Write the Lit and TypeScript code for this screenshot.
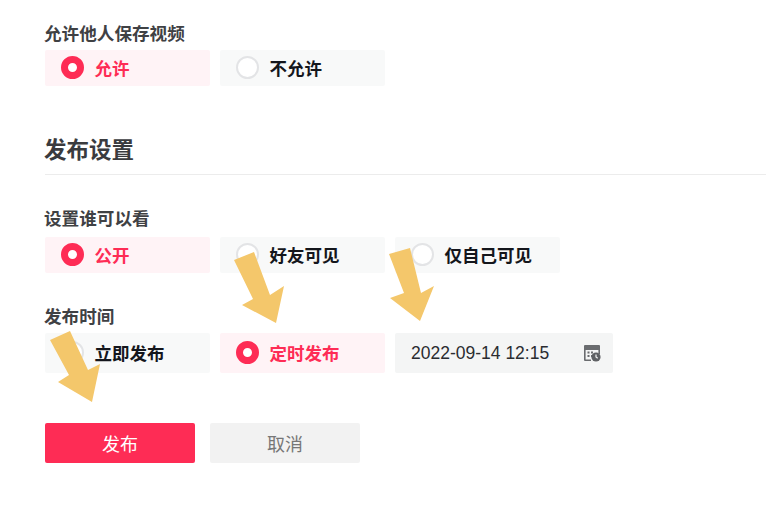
import { LitElement, html, css, svg } from "lit";
import { customElement } from "lit/decorators.js";

type Opt = { t: string; on?: boolean };

@customElement("app-root")
export class AppRoot extends LitElement {
  static styles = css`
    :host {
      display: block;
      position: relative;
      width: 768px;
      height: 512px;
      overflow: hidden;
      background: #fff;
      font-family: "Liberation Sans", "Noto Sans CJK SC", sans-serif;
      font-size: 17.5px;
      box-sizing: border-box;
    }
    .page { display: flex; flex-direction: column; padding: 22px 2px 0 45px; }
    .label { font-weight: 700; color: #3f4144; line-height: 24px; height: 24px; margin: 0 0 4px -1px; font-size: 17.6px; }
    .label.wide { margin-bottom: 6px; }
    .row { display: flex; gap: 10px; }
    .opt {
      width: 165px; height: 36px; box-sizing: border-box; display: flex; align-items: center;
      gap: 10.5px; padding: 0 0 2px 16px; border-radius: 2px; background: #f8f9f9;
      font-weight: 700; color: #14161c;
    }
    .opt.on { background: #fff3f6; color: #fe2c55; }
    .tall .opt { height: 40px; }
    .dot { width: 23px; height: 23px; box-sizing: border-box; border-radius: 50%; border: 2px solid #e3e4e6; background: #fff; flex: none; }
    .on .dot { border: 7.5px solid #fe2c55; }
    .title { font-size: 22.5px; font-weight: 700; color: #3a3b3e; line-height: 34px; margin-top: 48px; padding-bottom: 6px; border-bottom: 1px solid #ececec; }
    .title span { display: block; margin-left: -1px; }
    .who { margin-top: 32px; }
    .when { margin-top: 32px; }
    .date {
      width: 218px; height: 40px; box-sizing: border-box; display: flex; align-items: center;
      justify-content: space-between; padding: 0 12px 0 16px; border-radius: 2px;
      background: #f4f5f5; color: #2a2c30;
    }
    .date svg { width: 18px; height: 18px; display: block; }
    .actions { display: flex; gap: 15px; margin-top: 50px; font-size: 18px; }
    .btn { width: 150px; height: 40px; display: flex; align-items: center; justify-content: center; border-radius: 2px; background: #f2f2f2; color: #777; }
    .btn.primary { background: #fe2c55; color: #fff; }
    .arrows { position: absolute; left: 0; top: 0; width: 768px; height: 512px; pointer-events: none; }
    .arrows polygon { fill: #f4c76b; }
  `;

  private opt(o: Opt) {
    return html`<div class="opt ${o.on ? "on" : ""}"><span class="dot"></span><span>${o.t}</span></div>`;
  }

  render() {
    return html`
      <div class="page">
        <div class="label">允许他人保存视频</div>
        <div class="row">${[{ t: "允许", on: true }, { t: "不允许" }].map((o) => this.opt(o))}</div>
        <div class="title"><span>发布设置</span></div>
        <div class="who">
          <div class="label wide">设置谁可以看</div>
          <div class="row">${[{ t: "公开", on: true }, { t: "好友可见" }, { t: "仅自己可见" }].map((o) => this.opt(o))}</div>
        </div>
        <div class="when">
          <div class="label">发布时间</div>
          <div class="row tall">
            ${[{ t: "立即发布" }, { t: "定时发布", on: true }].map((o) => this.opt(o))}
            <div class="date">
              <span>2022-09-14 12:15</span>
              <svg viewBox="0 0 18 18">
                <path fill="#6a6c6f" d="M2 1h14a1 1 0 0 1 1 1v8h-1.6V6H2.6v9.4H8V17H2a1 1 0 0 1-1-1V2a1 1 0 0 1 1-1z"/>
                <path fill="#6a6c6f" d="M4.5 7.5h2v2h-2zM8 7.5h2v2H8zM4.5 11h2v2h-2zM8 11h1.5v2H8z"/>
                <circle cx="13" cy="13" r="4.6" fill="#5f6164"/>
                <path d="M13 10.6V13l1.7 1.3" fill="none" stroke="#f4f5f5" stroke-width="1.2"/>
              </svg>
            </div>
          </div>
        </div>
        <div class="actions">
          <div class="btn primary">发布</div>
          <div class="btn">取消</div>
        </div>
      </div>
      <svg class="arrows" viewBox="0 0 768 512">
        ${svg`
          <polygon points="234,260 254,252 270,295 284,286 276,323 242,305 253,299"/>
          <polygon points="50,340 70,331 88,370 100,364 92,402 58,382 69,375"/>
          <polygon points="389,254 410,248 421,293 434,286 420,321 390,298 404,293"/>
        `}
      </svg>
    `;
  }
}
